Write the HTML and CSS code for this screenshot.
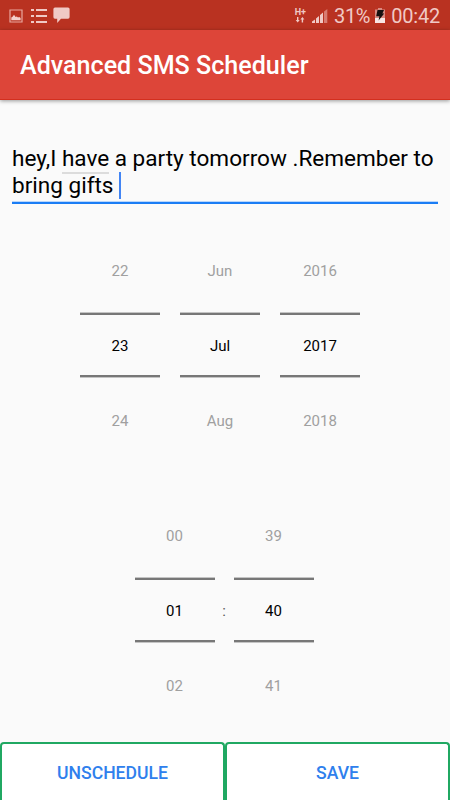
FILE: index.html
```html
<!DOCTYPE html>
<html lang="en">
<head>
    <meta charset="UTF-8">
    <meta name="viewport" content="width=device-width, initial-scale=1.0">
    <title>Advanced SMS Scheduler</title>
    <link rel="stylesheet" href="styles.css">
</head>
<body>

<!-- Status Bar -->
<div class="status-bar">
    <div class="notifications">
        <svg width="14" height="14" viewBox="0 0 14 14">
            <path d="M1 1h12v12H1z" fill="none" stroke="#e9a79f" stroke-width="1.2"/>
            <path d="M2.3 11.2V8.5l1.5-1 1.2-1.8 1.6 2.3 1.2-.6 1.2 1.2 1.2-.6 1.4 1v2.2z" fill="#f3d0cc"/>
        </svg>
        <svg class="list-icon" width="16" height="16" viewBox="0 0 16 16" fill="none" stroke="#f0c9c5" stroke-width="2.2">
            <path d="M0 2h3M0 8h3M0 14h3M5 2h11M5 8h11M5 14h11"/>
        </svg>
        <svg class="chat-icon" width="17" height="17" viewBox="0 0 17 17">
            <path d="M2 .5h13a1.6 1.6 0 0 1 1.6 1.6v8a1.6 1.6 0 0 1-1.6 1.6H8L4.2 16v-4.3H2A1.6 1.6 0 0 1 .4 10V2A1.6 1.6 0 0 1 2 .5z" fill="#f0c9c5"/>
        </svg>
    </div>
    <div class="system">
        <div class="network">
            <span class="network-type">H+</span>
            <svg width="10" height="6" viewBox="0 0 10 6" fill="#f0c9c5">
                <path d="M2 0h1.4v3h1.3l-2 2.6L.7 3H2zM6.7 5.6V2.6H5.4L7.4 0l2 2.6H8.1v3z"/>
            </svg>
        </div>
        <svg class="signal" width="16" height="14" viewBox="0 0 16 14">
            <path d="M0 14v-1.5l3-2V14zM4 14V9.5L7 7v7zM8 14V6l3-2.5V14z" fill="#f0c9c5"/>
            <path d="M12 14V2.5L15.3 0v14z" fill="#d77b71"/>
        </svg>
        <span class="percent">31%</span>
        <svg class="battery" width="10" height="15" viewBox="0 0 10 15">
            <path d="M3 0h4v1.5H3zM0 1.5h10V15H0z" fill="#d98a81"/>
            <path d="M0 10h10v5H0z" fill="#f8e6e4"/>
            <path d="M2.5 2H9L7.4 5.4h1.8L3.6 12.5l.8-4.3H1.2z" fill="#16100f"/>
        </svg>
        <span class="clock">00:42</span>
    </div>
</div>

<!-- App Bar -->
<div class="app-bar">Advanced SMS Scheduler</div>

<div class="content">
    <!-- Message -->
    <div class="message">hey,I <span class="suggestion">have</span> a party tomorrow .Remember to bring gifts <span class="caret"></span></div>

    <!-- Date Picker -->
    <div class="picker date-picker">
        <div class="wheel">
            <div class="option">22</div>
            <div class="option selected">23</div>
            <div class="option">24</div>
        </div>
        <div class="wheel">
            <div class="option">Jun</div>
            <div class="option selected">Jul</div>
            <div class="option">Aug</div>
        </div>
        <div class="wheel">
            <div class="option">2016</div>
            <div class="option selected">2017</div>
            <div class="option">2018</div>
        </div>
    </div>

    <!-- Time Picker -->
    <div class="picker time-picker">
        <div class="wheel">
            <div class="option">00</div>
            <div class="option selected">01</div>
            <div class="option">02</div>
        </div>
        <div class="separator">:</div>
        <div class="wheel">
            <div class="option">39</div>
            <div class="option selected">40</div>
            <div class="option">41</div>
        </div>
    </div>
</div>

<!-- Buttons -->
<div class="actions">
    <button class="action-button">UNSCHEDULE</button>
    <button class="action-button">SAVE</button>
</div>

</body>
</html>
```
FILE: styles.css
```css
* {
    box-sizing: border-box;
}
body {
    font-family: Roboto, sans-serif;
    background-color: #fafafa;
    margin: 0;
    height: 100vh;
    display: flex;
    flex-direction: column;
    overflow: hidden;
}
/* Status bar */
.status-bar {
    height: 30px;
    flex-shrink: 0;
    background-color: #b93221;
    color: #f0c9c5;
    display: flex;
    justify-content: space-between;
    padding: 1px 10px 0 9px;
}
.notifications, .system {
    display: flex;
    align-items: center;
}
.list-icon {
    margin-left: 8px;
}
.chat-icon {
    margin-left: 6px;
}
.system {
    font-size: 20px;
}
.network {
    display: flex;
    flex-direction: column;
    align-items: center;
    gap: 1px;
}
.network-type {
    font-size: 9px;
    font-weight: 700;
    line-height: 8px;
}
.signal {
    margin-left: 6px;
}
.percent {
    margin-left: 6px;
    letter-spacing: -0.3px;
}
.battery {
    margin-left: 5px;
}
.clock {
    margin-left: 6px;
    letter-spacing: -0.2px;
}
/* App bar */
.app-bar {
    height: 70px;
    flex-shrink: 0;
    padding-left: 20px;
    background-color: #dd4539;
    border-bottom: 1px solid #d32f1e;
    box-shadow: 0 1px 4px rgba(0, 0, 0, 0.4);
    color: white;
    font-size: 25.1px;
    font-weight: 500;
    line-height: 71px;
}
.content {
    flex: 1;
    padding: 45px 12px 0;
}
/* Message */
.message {
    height: 59px;
    padding-top: 1px;
    border-bottom: 2px solid #1a7df5;
    box-shadow: 0 -1px 0 #fafafa, inset 0 -1px 0 #b9d6fb;
    color: #000;
    font-size: 22.55px;
    line-height: 26.5px;
}
.suggestion {
    box-shadow: 0 2px 0 #dcdcdc;
}
.caret {
    display: inline-block;
    width: 2px;
    height: 27px;
    margin: -4px 0 -6px;
    background-color: #4285f4;
}
/* Pickers */
.picker {
    display: flex;
    justify-content: center;
}
.date-picker {
    gap: 20px;
    margin-top: 37px;
    padding-right: 10px;
}
.time-picker {
    margin-top: 55px;
    padding-right: 2px;
}
.wheel {
    width: 80px;
}
.option {
    height: 60px;
    color: #a0a0a0;
    font-size: 15px;
    line-height: 60px;
    text-align: center;
}
.option.selected {
    height: 64px;
    margin: 12px 0 14px;
    border-top: 2px solid #777;
    border-bottom: 2px solid #777;
    box-shadow: 0 -1px 0 #c4c4c4, 0 1px 0 #c4c4c4;
    color: #000;
    line-height: 62px;
}
.separator {
    width: 19px;
    align-self: center;
    color: #555;
    font-size: 15px;
    text-align: center;
}
/* Buttons */
.actions {
    display: flex;
    height: 58px;
    flex-shrink: 0;
}
.action-button {
    flex: 1;
    padding: 2px 0 0;
    background-color: white;
    border: 2px solid #20a862;
    border-bottom: none;
    border-radius: 4px 4px 0 0;
    color: #2f80ed;
    font-family: inherit;
    font-size: 17.6px;
    font-weight: 500;
}
```
